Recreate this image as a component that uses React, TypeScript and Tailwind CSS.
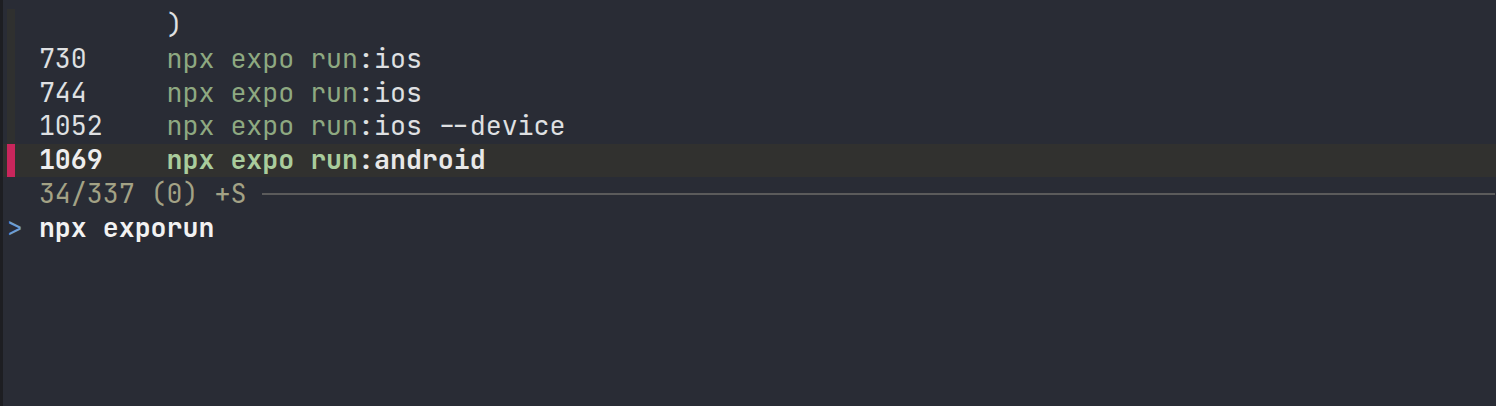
import React from "react";

const font = {
  fontFamily: '"JetBrains Mono", "DejaVu Sans Mono", "Liberation Mono", monospace',
};

function Row({
  children,
  gutter,
  highlight,
}: {
  children?: React.ReactNode;
  gutter?: React.ReactNode;
  highlight?: boolean;
}) {
  return (
    <div
      className={
        "flex h-[33.8px] items-center pl-[4px] whitespace-pre " +
        (highlight ? "bg-[#31312f]" : "")
      }
    >
      <div className="flex h-full w-[2ch] items-center">{gutter}</div>
      {children}
    </div>
  );
}

const Marker = ({ color }: { color: string }) => (
  <div className={"h-full w-[8px] " + color} />
);

export default function App() {
  return (
    <div
      className="flex h-[406px] w-full overflow-hidden bg-[#292c35] text-[26.6px] leading-none text-[#dfe0e2]"
      style={font}
    >
      <div className="w-[3px] shrink-0 bg-[#1d1e22]" />
      <div className="flex flex-1 flex-col pt-[8.5px]">
        <Row gutter={<Marker color="bg-[#2f302f]" />}>
          <span>{"        )"}</span>
        </Row>
        <Row gutter={<Marker color="bg-[#2f302f]" />}>
          <span>{"730     "}</span>
          <span className="text-[#8ea981]">npx expo run</span>
          <span>:ios</span>
        </Row>
        <Row gutter={<Marker color="bg-[#2f302f]" />}>
          <span>{"744     "}</span>
          <span className="text-[#8ea981]">npx expo run</span>
          <span>:ios</span>
        </Row>
        <Row gutter={<Marker color="bg-[#2f302f]" />}>
          <span>{"1052    "}</span>
          <span className="text-[#8ea981]">npx expo run</span>
          <span>:ios --device</span>
        </Row>
        <Row highlight gutter={<Marker color="bg-[#c9265c]" />}>
          <span className="font-bold text-[#eeeeee]">{"1069    "}</span>
          <span className="font-bold text-[#a9cc9c]">npx expo run</span>
          <span className="font-semibold text-[#e8e8e8]">:android</span>
        </Row>
        <Row>
          <span className="text-[#a3a285]">{"34/337 (0) +S "}</span>
          <div className="mr-[1px] h-[2px] flex-1 bg-[#5b5b5b]" />
        </Row>
        <Row gutter={<span className="text-[#6d9dd3]">&gt;</span>}>
          <span className="font-bold text-[#f2f2f2]">npx exporun</span>
        </Row>
      </div>
    </div>
  );
}
